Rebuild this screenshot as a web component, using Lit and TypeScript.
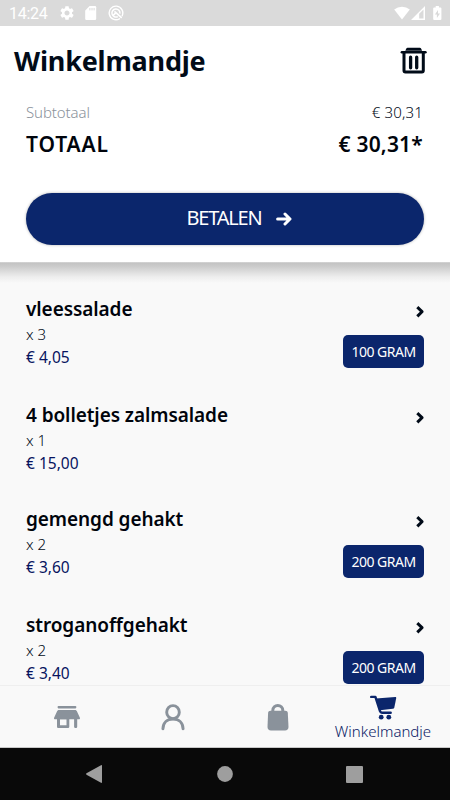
import { LitElement, html, css, svg, nothing } from "lit";
import { customElement } from "lit/decorators.js";

interface Item {
  name: string;
  count: number;
  price: string;
  weight?: string;
  cls: string;
}

const items: Item[] = [
  { name: "vleessalade", count: 3, price: "€ 4,05", weight: "100 GRAM", cls: "" },
  { name: "4 bolletjes zalmsalade", count: 1, price: "€ 15,00", cls: "short" },
  { name: "gemengd gehakt", count: 2, price: "€ 3,60", weight: "200 GRAM", cls: "" },
  { name: "stroganoffgehakt", count: 2, price: "€ 3,40", weight: "200 GRAM", cls: "" },
];

const icon = (w: number, h: number, body: unknown) =>
  html`<svg width=${w} height=${h} viewBox="0 0 ${w} ${h}" fill="none">${body}</svg>`;

const gear = icon(14, 14, svg`<path fill="#fff" transform="translate(-1.4 -1.4) scale(.7)" d="M19.14 12.94c.04-.3.06-.61.06-.94 0-.32-.02-.64-.07-.94l2.03-1.58c.18-.14.23-.41.12-.61l-1.92-3.32c-.12-.22-.37-.29-.59-.22l-2.39.96c-.5-.38-1.03-.7-1.62-.94L14.4 2.81c-.04-.24-.24-.41-.48-.41h-3.84c-.24 0-.43.17-.47.41l-.36 2.54c-.59.24-1.13.57-1.62.94l-2.39-.96c-.22-.08-.47 0-.59.22L2.74 8.87c-.12.21-.08.47.12.61l2.03 1.58c-.05.3-.09.63-.09.94s.02.64.07.94l-2.03 1.58c-.18.14-.23.41-.12.61l1.92 3.32c.12.22.37.29.59.22l2.39-.96c.5.38 1.03.7 1.62.94l.36 2.54c.05.24.24.41.48.41h3.84c.24 0 .44-.17.47-.41l.36-2.54c.59-.24 1.13-.56 1.62-.94l2.39.96c.22.08.47 0 .59-.22l1.92-3.32c.12-.22.07-.47-.12-.61l-2.01-1.58zM12 15.6c-1.98 0-3.6-1.62-3.6-3.6s1.62-3.6 3.6-3.6 3.6 1.62 3.6 3.6-1.62 3.6-3.6 3.6z"/>`);
const card = icon(12, 14, svg`<path fill="#fff" d="M4.6 0H10a1.2 1.2 0 0 1 1.2 1.2v11.6A1.2 1.2 0 0 1 10 14H1.4A1.2 1.2 0 0 1 .2 12.8V4.4z"/><path stroke="#dadada" stroke-width="1" d="M4.9 2v2.4M7 2v2.4M9.1 2v2.4"/>`);
const shield = icon(16, 16, svg`<path stroke="#fff" stroke-width="1.4" stroke-linecap="round" d="M11.400 13.800A6.800 6.800 0 1 1 14.200 10.700"/><path stroke="#fff" stroke-width="1.500" d="M9.800 11.600A4 4 0 1 1 11.900 8.600"/><path stroke="#fff" stroke-width="1.7" stroke-linecap="round" d="M7 6.800l6.200 5.600M5.400 10.200l2.400-2.400"/>`);
const wifi = icon(16, 14, svg`<path fill="#fff" d="M8 13.4.2 3.4a12.4 12.4 0 0 1 15.6 0z"/>`);
const signal = icon(14, 14, svg`<path fill="#fff" fill-rule="evenodd" d="M14 0v14H0zM8.2 7.8v4.700h4.300V3.500z"/>`);
const battery = icon(9, 14, svg`<path fill="#fff" d="M2.7 0h3.2v1.4h1.6c.5 0 .9.4.9.9v10.8c0 .5-.4.9-.9.9H1.1a.9.9 0 0 1-.9-.9V2.3c0-.5.4-.9.9-.9h1.6z"/><path fill="#dadada" d="M5 4 1.9 8.4h2V12L7 7.5H5z"/>`);
const trash = icon(28, 28, svg`<path fill="#010b18" d="M7.600.8h12.200c.6 0 1.100.4 1.400 1l.9 2H5.300l.9-2c.3-.6.8-1 1.400-1z"/><path stroke="#010b18" stroke-width="2.6" stroke-linecap="round" d="M1.900 5.200h23.500"/><path stroke="#010b18" stroke-width="3" stroke-linejoin="round" d="M4 5.400v18.200c0 .9.5 1.400 1.400 1.400h16.500c.9 0 1.400-.5 1.400-1.400V5.400"/><path stroke="#010b18" stroke-width="3.300" stroke-linecap="round" d="M10.600 10.200v10.600M16.700 10.200v10.600"/>`);
const arrow = icon(16, 14, svg`<path stroke="#fff" stroke-width="3" stroke-linecap="round" stroke-linejoin="round" d="M1.600 7h12M9 2l5 5-5 5"/>`);
const chevron = icon(8, 12, svg`<path stroke="#010b18" stroke-width="3" stroke-linejoin="round" d="M1.300 1.200 6 5.700l-4.700 4.700"/>`);
const shop = icon(26, 23, svg`<g fill="#8a929b"><rect x="3.6" y="0" width="18.7" height="2.4" rx=".8"/><path d="M5 4h16c.8 0 1.5.4 1.8 1.100l3.100 6.700c.3.700-.2 1.400-.9 1.400H1C.3 13.200-.2 12.500.1 11.800L3.200 5.100C3.500 4.400 4.200 4 5 4z"/><path fill-rule="evenodd" d="M3 12h12.300v8.500c0 1-.6 1.600-1.600 1.600H4.600c-1 0-1.600-.6-1.600-1.600zM6 13.200v6h6.500v-6z"/><path d="M20.100 12h3.100v8.700c0 .8-.6 1.400-1.500 1.400s-1.600-.6-1.600-1.400z"/></g>`);
const person = icon(24, 27, svg`<g stroke="#8a929b" stroke-width="2.900" stroke-linecap="round"><ellipse cx="12" cy="8.200" rx="6.300" ry="6.600"/><path d="M1.900 24.900c.2-6.200 4.400-9.900 10.100-9.900s9.900 3.700 10.100 9.900"/></g>`);
const bag = icon(22, 27, svg`<path stroke="#8a929b" stroke-width="3" d="M5.800 8V6.500c0-3 2.300-5 5-5s5 2 5 5V8"/><path fill="#8a929b" d="M3.500 6.800h14.800c1.500 0 2.400.8 2.500 2.200l.7 14c0 2.200-1.300 3.500-3.500 3.500H4C1.800 26.500.5 25.200.5 23l.6-14c.1-1.400 1-2.200 2.400-2.200z"/>`);
const cart = icon(28, 25, svg`<path stroke="#0b266c" stroke-width="2.400" stroke-linecap="round" stroke-linejoin="round" d="M2.200 1.900h4.200l4.600 14.300c.4 1.200 1 1.500 2 1.500h8.700"/><path fill="#0b266c" d="M7 3.400 26.300 2.100c.7 0 1 .5.900 1.100l-1.900 9.300c-.2.800-.7 1.200-1.500 1.300L11 15.300z"/><circle cx="12.200" cy="22.200" r="2.400" fill="#0b266c"/><circle cx="19.800" cy="22.200" r="2.400" fill="#0b266c"/>`);

@customElement("app-root")
export class AppRoot extends LitElement {
  static styles = css`
    :host {
      display: flex;
      flex-direction: column;
      width: 450px;
      height: 800px;
      overflow: hidden;
      background: #f9f9f9;
      color: #010b18;
      font-family: "Noto Sans", "Open Sans", sans-serif;
      white-space: nowrap;
    }
    svg { display: block; flex: none; }
    .status {
      display: flex;
      flex: none;
      align-items: center;
      height: 26px;
      padding: 0 8px 0 9px;
      background: #dadada;
      color: #fff;
      font: 16px/27px Roboto, sans-serif;
    }
    .clock { width: 51px; letter-spacing: -0.3px; }
    .gap11 { margin-right: 11px; }
    .push { margin-left: auto; margin-right: 1px; }
    .sig { margin-right: 8px; }
    .head {
      flex: none;
      height: 236px;
      box-sizing: border-box;
      background: #fff;
    }
    .bar {
      display: flex;
      align-items: center;
      justify-content: space-between;
      height: 70px;
      padding: 0 22px 0 14px;
    }
    .title { font-size: 27px; font-weight: 700; letter-spacing: -0.2px; line-height: 36px; margin-top: -1px; }
    .row {
      display: flex;
      justify-content: space-between;
      height: 32px;
      padding: 0 27px 0 26px;
      line-height: 32px;
    }
    .sub { font-size: 15px; font-weight: 300; }
    .subsum { letter-spacing: 0.15px; }
    .grey { color: #8a929b; letter-spacing: -0.1px; }
    .total { font-size: 21px; font-weight: 600; color: #00040c; }
    .tot { letter-spacing: 0.85px; }
    .sum { letter-spacing: 0.2px; }
    .pay {
      display: flex;
      align-items: center;
      justify-content: center;
      gap: 14px;
      width: 398px;
      height: 52px;
      box-sizing: border-box;
      padding-left: 28px;
      margin: 33px 0 0 26px;
      border-radius: 26px;
      background: #0b266c;
      color: #fff;
      font-size: 20px;
      box-shadow: 0 0 3px rgba(0, 0, 0, 0.3);
    }
    .pay-text { letter-spacing: -1.2px; line-height: 28px; margin-top: -2px; }
    .list {
      flex: 1;
      min-height: 0;
      overflow: hidden;
      padding: 34px 26px 0;
      background: linear-gradient(#dedede 0, #c3c3c3 1px, #cdcdcd 5px, #dedede 10px, #eeeeee 15px, #f9f9f9 21px);
    }
    .item { display: flex; justify-content: space-between; height: 106px; }
    .item.short { height: 104px; }
    .name { font-size: 19px; font-weight: 600; line-height: 26px; color: #00040c; letter-spacing: -0.08px; }
    .count { font-size: 15px; font-weight: 300; line-height: 24px; }
    .price { font-size: 15.5px; line-height: 23px; color: #07145f; }
    .side { display: flex; flex-direction: column; align-items: flex-end; padding-top: 10px; }
    .badge {
      margin-top: 17px;
      width: 81px;
      height: 33px;
      border-radius: 5px;
      background: #0b266c;
      color: #fff;
      font-size: 14px;
      letter-spacing: -0.5px;
      line-height: 33px;
      text-align: center;
    }
    .tabs {
      display: grid;
      grid-template-columns: 134px 77px 134px 76px;
      flex: none;
      height: 63px;
      box-sizing: border-box;
      border-top: 1px solid #efefef;
      border-bottom: 1px solid #c8c8c8;
      background: #f9f9f9;
      justify-items: center;
      align-items: center;
    }
    .tab { padding-top: 1px; }
    .current {
      display: flex;
      flex-direction: column;
      align-items: center;
      gap: 1px;
      padding-top: 3px;
      color: #0b1a66;
      font-size: 15px;
      font-weight: 300;
      line-height: 20px;
    }
    .system {
      display: flex;
      flex: none;
      align-items: center;
      height: 52px;
      background: #090909;
    }
    .back { margin-left: 86px; }
    .home { margin-left: 115px; }
    .recent { margin-left: 113px; }
  `;

  render() {
    return html`
      <div class="status">
        <span class="clock">14:24</span>
        <span class="gap11">${gear}</span><span class="gap11">${card}</span>${shield}
        <span class="push">${wifi}</span><span class="sig">${signal}</span>${battery}
      </div>
      <div class="head">
        <div class="bar"><span class="title">Winkelmandje</span>${trash}</div>
        <div class="row sub"><span class="grey">Subtotaal</span><span class="subsum">€ 30,31</span></div>
        <div class="row total"><span class="tot">TOTAAL</span><span class="sum">€ 30,31*</span></div>
        <div class="pay"><span class="pay-text">BETALEN</span>${arrow}</div>
      </div>
      <div class="list">
        ${items.map(
          (i) => html`<div class="item ${i.cls}">
            <div>
              <div class="name">${i.name}</div>
              <div class="count">x ${i.count}</div>
              <div class="price">${i.price}</div>
            </div>
            <div class="side">
              ${chevron}${i.weight ? html`<div class="badge">${i.weight}</div>` : nothing}
            </div>
          </div>`
        )}
      </div>
      <div class="tabs">
        <span class="tab">${shop}</span><span class="tab">${person}</span><span class="tab">${bag}</span>
        <div class="current">${cart}<span>Winkelmandje</span></div>
      </div>
      <div class="system">
        <span class="back">${icon(16, 18, svg`<path fill="#9e9e9e" d="M15 .2c.6-.3 1 0 1 .5v16.600c0 .5-.4.800-1 .5L.500 9.700c-.6-.4-.6-1 0-1.400z"/>`)}</span>
        <span class="home">${icon(16, 16, svg`<circle cx="8" cy="8" r="7.900" fill="#9e9e9e"/>`)}</span>
        <span class="recent">${icon(17, 17, svg`<rect width="17" height="17" rx="1" fill="#9e9e9e"/>`)}</span>
      </div>
    `;
  }
}
